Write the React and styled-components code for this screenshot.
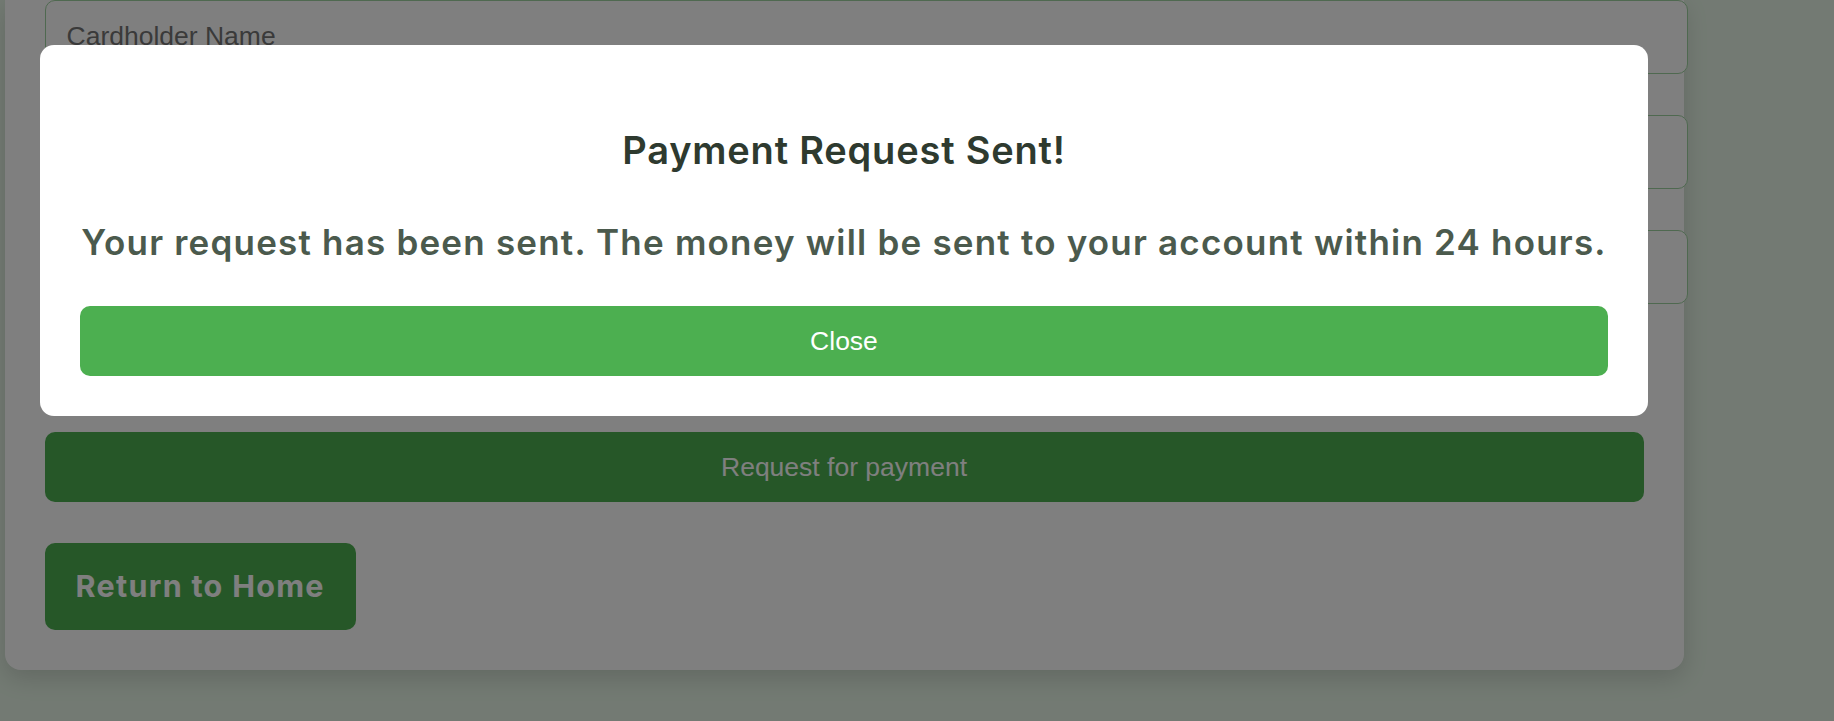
import React from 'react';
import styled, { createGlobalStyle } from 'styled-components';

const GlobalStyle = createGlobalStyle`
    * {
        margin: 0;
    }
    body {
        margin: 0;
        background: #e6f5e6;
        font-family: 'Liberation Sans', Arial, sans-serif;
        overflow: hidden;
    }
`;

export default function App() {
    return (
        <>
            <GlobalStyle />
            <Page>
                <PaymentCard>
                    <Fields>
                        <Field type='text' name='name' placeholder='Cardholder Name' />
                        <Field type='text' name='number' placeholder='Card Number' />
                        <Field type='text' name='expiry' placeholder='Expiry Date' />
                    </Fields>
                    <SubmitButton>Request for payment</SubmitButton>
                    <HomeButton>Return to Home</HomeButton>
                </PaymentCard>
            </Page>
            <Overlay>
                <Modal>
                    <ModalTitle>Payment Request Sent!</ModalTitle>
                    <ModalText>Your request has been sent. The money will be sent to your account within 24 hours.</ModalText>
                    <CloseButton>Close</CloseButton>
                </Modal>
            </Overlay>
        </>
    );
}

//styles

const Page = styled.div`
    min-height: 721px;
    padding-left: 4.5px;
`;

const PaymentCard = styled.div`
    width: 1599px;
    padding: 0 40px 40px;
    background: #ffffff;
    border-radius: 0 0 16px 16px;
    box-shadow: 0 8px 24px rgba(0, 0, 0, 0.15);
    display: flex;
    flex-direction: column;
    align-items: flex-start;
`;

const Fields = styled.div`
    width: 100%;
    display: flex;
    flex-direction: column;
    gap: 41.5px;
`;

const Field = styled.input`
    box-sizing: content-box;
    width: 100%;
    padding: 20px 21px;
    border: 1px solid #9fd3a1;
    border-radius: 10px;
    font-family: 'Liberation Sans', Arial, sans-serif;
    font-size: 26.5px;
    line-height: 31.5px;
    height: 31.5px;
    background: #ffffff;
    color: #333333;
    outline: none;
    &::placeholder {
        color: #757575;
    }
`;

const GreenButton = styled.button`
    border: none;
    border-radius: 10px;
    background: #4caf50;
    color: #ffffff;
    cursor: pointer;
`;

const SubmitButton = styled(GreenButton)`
    width: 100%;
    margin-top: 128px;
    padding: 20px;
    font-family: 'Liberation Sans', Arial, sans-serif;
    font-size: 26.5px;
    line-height: 30.5px;
`;

const HomeButton = styled(GreenButton)`
    margin-top: 40.5px;
    padding: 21.5px 31px;
    font-family: Inter, 'Open Sans', sans-serif;
    font-weight: 700;
    font-size: 30.5px;
    letter-spacing: 1.3px;
    line-height: 44px;
`;

const Overlay = styled.div`
    position: fixed;
    inset: 0;
    background: rgba(0, 0, 0, 0.5);
    padding: 44.5px 0 0 40px;
`;

const Modal = styled.div`
    box-sizing: border-box;
    width: 1608px;
    padding: 40px;
    background: #ffffff;
    border-radius: 14px;
    display: flex;
    flex-direction: column;
    align-items: stretch;
    text-align: center;
`;

const ModalTitle = styled.h2`
    margin-top: 43.5px;
    font-family: Inter, 'Open Sans', sans-serif;
    font-weight: 600;
    font-size: 38px;
    letter-spacing: 0.8px;
    line-height: 44px;
    color: #2e3a2f;
`;

const ModalText = styled.p`
    margin-top: 49.3px;
    font-family: Inter, 'Open Sans', sans-serif;
    font-weight: 600;
    font-size: 35px;
    letter-spacing: 1.2px;
    line-height: 42px;
    color: #4b5a4d;
    white-space: nowrap;
`;

const CloseButton = styled(GreenButton)`
    margin-top: 42.7px;
    padding: 20px;
    font-family: 'Liberation Sans', Arial, sans-serif;
    font-size: 26.5px;
    line-height: 30.4px;
`;
